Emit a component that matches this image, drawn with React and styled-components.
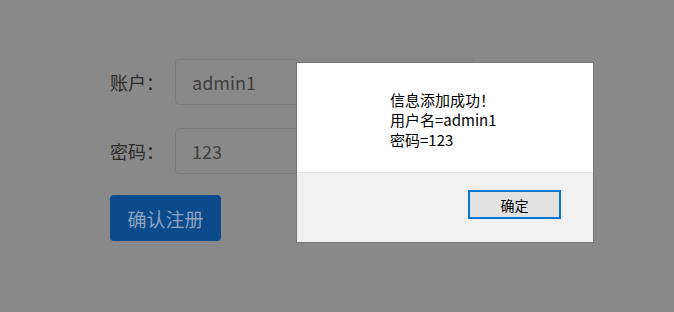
import React from 'react';
import styled, { createGlobalStyle } from 'styled-components';

const GlobalStyle = createGlobalStyle`
  html, body {
    margin: 0;
    padding: 0;
    background: #898989;
    font-family: "Noto Sans CJK SC", "Noto Sans", sans-serif;
  }
`;

const Page = styled.div`
  width: 674px;
  height: 312px;
  position: relative;
  overflow: hidden;
  background: #898989;
`;

const Form = styled.form`
  display: flex;
  flex-direction: column;
  gap: 23px;
  padding: 59px 0 0 110px;
`;

const Row = styled.div`
  display: flex;
  align-items: center;
`;

const Label = styled.label`
  width: 65px;
  font-size: 18px;
  color: #2b2b2b;
`;

const Field = styled.div`
  box-sizing: border-box;
  width: 300px;
  height: 46px;
  padding: 0 16px;
  display: flex;
  align-items: center;
  border: 1px solid #7b7b7b;
  border-radius: 4px;
  font-size: 18px;
  color: #3f3f3f;
`;

const Submit = styled.button`
  width: 111px;
  height: 46px;
  margin-top: -2px;
  border: none;
  border-radius: 4px;
  background: #0b4a8b;
  color: #8ea3bd;
  font-family: inherit;
  font-size: 19px;
  padding: 0;
`;

const Dialog = styled.div`
  position: absolute;
  left: 296px;
  top: 62px;
  width: 298px;
  height: 181px;
  box-sizing: border-box;
  border: 1px solid #767676;
  display: flex;
  flex-direction: column;
  font-family: "Noto Sans CJK SC", sans-serif;
`;

const Body = styled.div`
  height: 110px;
  box-sizing: border-box;
  background: #ffffff;
  border-bottom: 1px solid #e3e3e3;
  padding: 27px 0 0 93px;
  font-size: 15px;
  line-height: 20px;
  color: #000;
`;

const Footer = styled.div`
  flex: 1;
  background: #f0f0f0;
  display: flex;
  justify-content: flex-end;
  align-items: flex-start;
  padding: 17px 32px 0 0;
`;

const OkButton = styled.button`
  width: 93px;
  height: 29px;
  box-sizing: border-box;
  border: 2px solid #0078d7;
  background: #e1e1e1;
  font-family: inherit;
  font-size: 14px;
  color: #000;
  padding: 0;
`;

export default function App() {
  return (
    <Page>
      <GlobalStyle />
      <Form>
        <Row>
          <Label>账户：</Label>
          <Field>admin1</Field>
        </Row>
        <Row>
          <Label>密码：</Label>
          <Field>123</Field>
        </Row>
        <Row>
          <Submit type="button">确认注册</Submit>
        </Row>
      </Form>
      <Dialog>
        <Body>
          <div>信息添加成功！</div>
          <div>用户名=admin1</div>
          <div>密码=123</div>
        </Body>
        <Footer>
          <OkButton type="button">确定</OkButton>
        </Footer>
      </Dialog>
    </Page>
  );
}
